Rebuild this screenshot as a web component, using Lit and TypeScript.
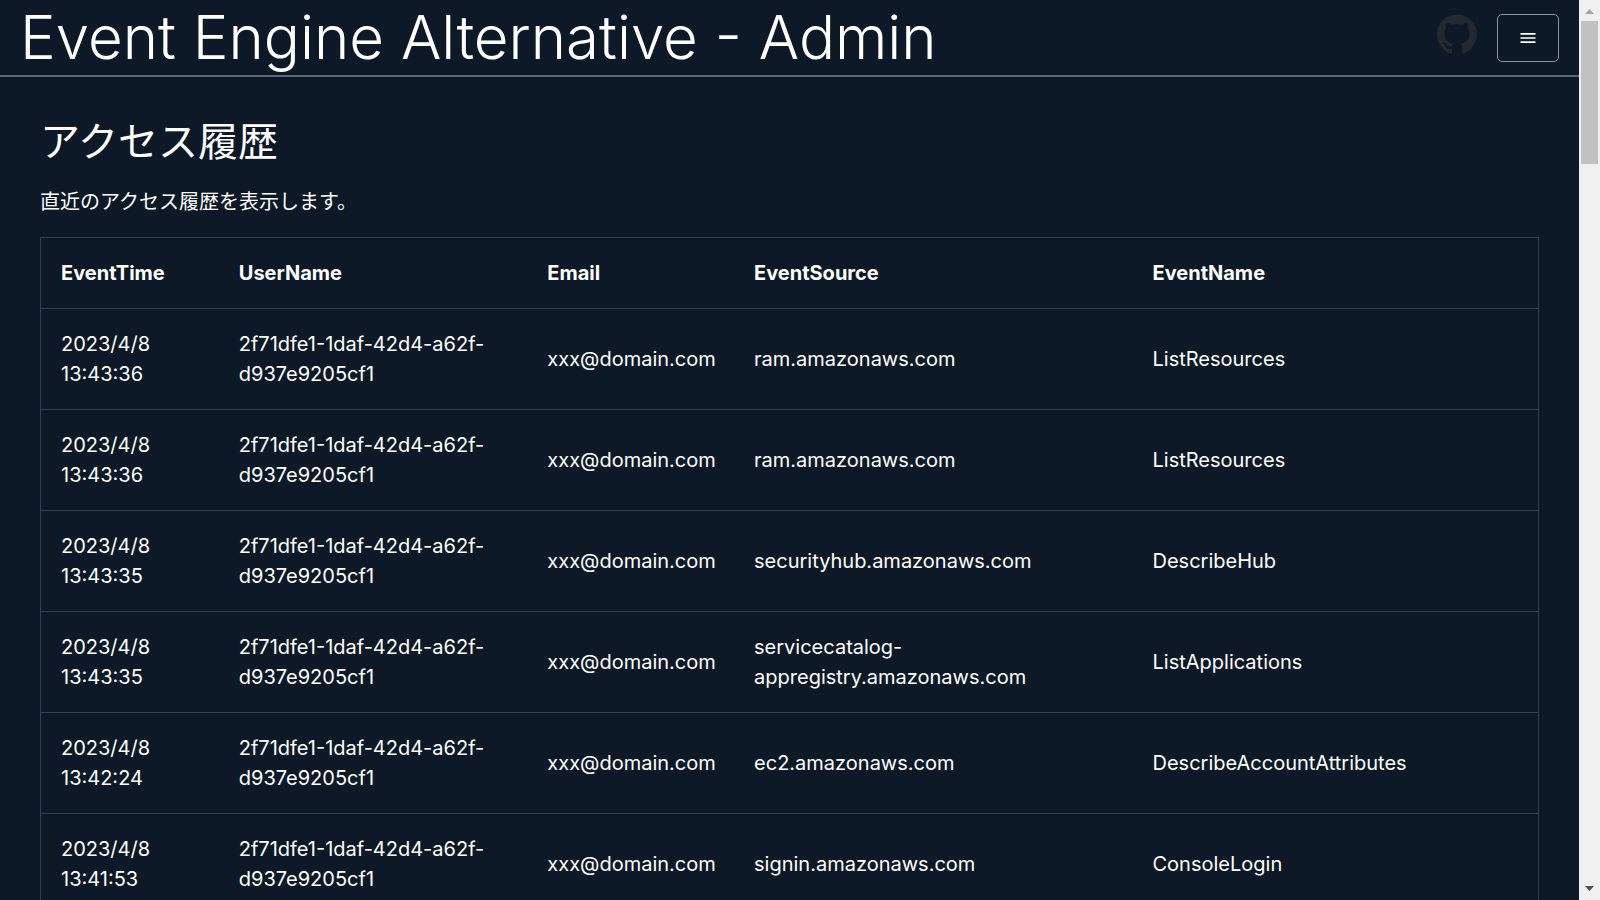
import { LitElement, html, css } from "lit";
import { customElement, property } from "lit/decorators.js";

interface AccessEvent {
  time: string;
  user: string;
  email: string;
  source: string;
  name: string;
}

const USER = "2f71dfe1-1daf-42d4-a62f-d937e9205cf1";
const EMAIL = "xxx@domain.com";

const row = (time: string, source: string, name: string): AccessEvent => ({
  time: `2023/4/8 ${time}`,
  user: USER,
  email: EMAIL,
  source,
  name,
});

const EVENTS: AccessEvent[] = [
  row("13:43:36", "ram.amazonaws.com", "ListResources"),
  row("13:43:36", "ram.amazonaws.com", "ListResources"),
  row("13:43:35", "securityhub.amazonaws.com", "DescribeHub"),
  row("13:43:35", "servicecatalog-appregistry.amazonaws.com", "ListApplications"),
  row("13:42:24", "ec2.amazonaws.com", "DescribeAccountAttributes"),
  row("13:41:53", "signin.amazonaws.com", "ConsoleLogin"),
];

@customElement("app-header")
export class AppHeader extends LitElement {
  static styles = css`
    :host {
      display: flex;
      justify-content: space-between;
      align-items: center;
      padding: 0 20px;
      border-bottom: 2px solid #5c6670;
    }
    .title {
      margin: 0;
      font-size: 60px;
      line-height: 75px;
      font-weight: 300;
      font-optical-sizing: none;
    }
    .actions {
      display: flex;
      align-items: flex-start;
      gap: 20px;
    }
    .github {
      display: block;
      color: #24292f;
    }
    .github svg {
      display: block;
      width: 40px;
      height: 40px;
    }
    .menu {
      display: flex;
      align-items: center;
      justify-content: center;
      box-sizing: border-box;
      width: 62px;
      height: 48px;
      padding: 0;
      border: 1px solid #89949f;
      border-radius: 5px;
      background: transparent;
      color: #fff;
      cursor: pointer;
    }
    .menu svg {
      width: 20px;
      height: 20px;
    }
  `;

  render() {
    return html`
      <h1 class="title">Event Engine Alternative - Admin</h1>
      <div class="actions">
        <a class="github" href="#" aria-label="GitHub">
          <svg viewBox="0 0 98 96" fill="currentColor" aria-hidden="true">
            <path
              fill-rule="evenodd"
              clip-rule="evenodd"
              d="M48.854 0C21.839 0 0 22 0 49.217c0 21.756 13.993 40.172 33.405 46.69 2.427.49 3.316-1.059 3.316-2.362 0-1.141-.08-5.052-.08-9.127-13.59 2.934-16.42-5.867-16.42-5.867-2.184-5.704-5.42-7.17-5.42-7.17-4.448-3.015.324-3.015.324-3.015 4.934.326 7.523 5.052 7.523 5.052 4.367 7.496 11.404 5.378 14.235 4.074.404-3.178 1.699-5.378 3.074-6.6-10.839-1.141-22.243-5.378-22.243-24.283 0-5.378 1.94-9.778 5.014-13.2-.485-1.222-2.184-6.275.486-13.038 0 0 4.125-1.304 13.426 5.052a46.97 46.97 0 0 1 12.214-1.63c4.125 0 8.33.571 12.213 1.63 9.302-6.356 13.427-5.052 13.427-5.052 2.67 6.763.97 11.816.485 13.038 3.155 3.422 5.015 7.822 5.015 13.2 0 18.905-11.404 23.06-22.324 24.283 1.78 1.548 3.316 4.481 3.316 9.126 0 6.6-.08 11.897-.08 13.526 0 1.304.89 2.853 3.316 2.364 19.412-6.52 33.405-24.935 33.405-46.691C97.707 22 75.788 0 48.854 0z"
            />
          </svg>
        </a>
        <button class="menu" type="button" aria-label="Menu">
          <svg viewBox="0 0 24 24" fill="currentColor" aria-hidden="true">
            <path d="M3 18h18v-2H3v2zm0-5h18v-2H3v2zm0-7v2h18V6H3z" />
          </svg>
        </button>
      </div>
    `;
  }
}

@customElement("event-table")
export class EventTable extends LitElement {
  @property({ attribute: false }) events: AccessEvent[] = [];

  static styles = css`
    :host {
      display: block;
    }
    .table {
      width: 100%;
      table-layout: fixed;
      border-collapse: collapse;
      border: 1px solid #304050;
    }
    .time {
      width: 11.9%;
    }
    .user {
      width: 20.6%;
    }
    .email {
      width: 13.8%;
    }
    .source {
      width: 26.6%;
    }
    .cell {
      padding: 20px;
      text-align: left;
      vertical-align: middle;
      border-bottom: 1px solid #304050;
    }
    .head {
      font-weight: 700;
    }
  `;

  render() {
    return html`
      <table class="table">
        <colgroup>
          <col class="time" />
          <col class="user" />
          <col class="email" />
          <col class="source" />
          <col />
        </colgroup>
        <thead>
          <tr>
            ${["EventTime", "UserName", "Email", "EventSource", "EventName"].map(
              (label) => html`<th class="cell head" scope="col">${label}</th>`
            )}
          </tr>
        </thead>
        <tbody>
          ${this.events.map(
            (e) => html`<tr>
              <td class="cell">${e.time}</td>
              <td class="cell">${e.user}</td>
              <td class="cell">${e.email}</td>
              <td class="cell">${e.source}</td>
              <td class="cell">${e.name}</td>
            </tr>`
          )}
        </tbody>
      </table>
    `;
  }
}

@customElement("scroll-track")
export class ScrollTrack extends LitElement {
  static styles = css`
    :host {
      display: flex;
      flex-direction: column;
      flex: none;
      width: 21px;
      background: #f0f0f0;
    }
    .arrow {
      flex: none;
      display: block;
      width: 21px;
      height: 21px;
    }
    .up {
      fill: #a3a3a3;
    }
    .down {
      fill: #505050;
    }
    .track {
      flex: 1;
      padding: 0 2px;
    }
    .thumb {
      height: 143px;
      background: #c1c1c1;
    }
  `;

  render() {
    return html`
      <svg class="arrow up" viewBox="0 0 21 21"><path d="M6 14h9l-4.5-5z" /></svg>
      <div class="track"><div class="thumb"></div></div>
      <svg class="arrow down" viewBox="0 0 21 21"><path d="M6 7h9l-4.5 5z" /></svg>
    `;
  }
}

@customElement("app-root")
export class AppRoot extends LitElement {
  static styles = css`
    :host {
      display: flex;
      height: 100vh;
      overflow: hidden;
      background: #0d1926;
      color: #fff;
      font-family: Inter, "Noto Sans CJK JP", sans-serif;
      font-size: 20px;
      line-height: 30px;
    }
    .page {
      flex: 1;
      min-width: 0;
      overflow-y: auto;
      scrollbar-width: none;
    }
    .main {
      display: flex;
      flex-direction: column;
      gap: 20px;
      padding: 40px;
    }
    .heading {
      margin: 0;
      font-size: 40px;
      line-height: 50px;
      font-weight: 400;
    }
    .lead {
      margin: 0;
    }
  `;

  render() {
    return html`
      <div class="page">
        <app-header></app-header>
        <main class="main">
          <h2 class="heading">アクセス履歴</h2>
          <p class="lead">直近のアクセス履歴を表示します。</p>
          <event-table .events=${EVENTS}></event-table>
        </main>
      </div>
      <scroll-track aria-hidden="true"></scroll-track>
    `;
  }
}
